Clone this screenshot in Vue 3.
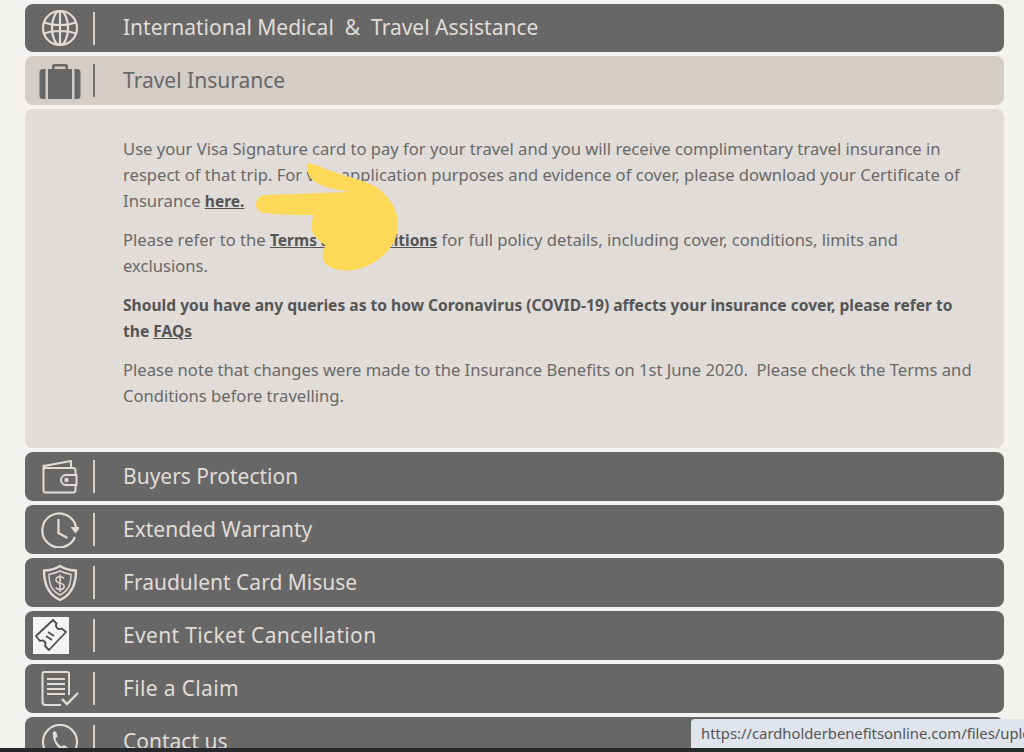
<template>
  <div class="page">
    <div class="list">
      <div class="row first">
        <div class="ico">
          <svg viewBox="0 0 38 38" width="38" height="38" fill="none" stroke="currentColor" stroke-width="2.2">
            <circle cx="19" cy="19" r="17"/>
            <ellipse cx="19" cy="19" rx="8" ry="17"/>
            <path d="M19 2v34M2.500 13c4 2 9 3 16.500 3s12.500-1 16.500-3M2.500 25c4-2 9-3 16.500-3s12.500 1 16.500 3"/>
          </svg>
        </div>
        <span class="sep"></span>
        <span class="title">International Medical&nbsp; &amp;&nbsp; Travel Assistance</span>
      </div>

      <div class="row open">
        <div class="ico">
          <svg viewBox="0 0 42 36" width="42" height="36" fill="currentColor">
            <path d="M13 6V3.500A2.500 2.500 0 0 1 15.500 1h11A2.500 2.500 0 0 1 29 3.500V6h-2.500V3.500h-11V6z"/>
            <path d="M9 6h24v30H9zM6.500 6v30H4a3.500 3.500 0 0 1-3.500-3.500v-23A3.500 3.500 0 0 1 4 6zM35.500 6H38a3.500 3.500 0 0 1 3.500 3.500v23A3.500 3.500 0 0 1 38 36h-2.500z"/>
          </svg>
        </div>
        <span class="sep"></span>
        <span class="title">Travel Insurance</span>
      </div>

      <div class="panel">
        <p>Use your Visa Signature card to pay for your travel and you will receive complimentary travel insurance in respect of that trip. For visa application purposes and evidence of cover, please download your Certificate of Insurance <a>here.</a></p>
        <p>Please refer to the <a>Terms and Conditions</a> for full policy details, including cover, conditions, limits and exclusions.</p>
        <p><strong>Should you have any queries as to how Coronavirus (COVID-19) affects your insurance cover, please refer to the <a>FAQs</a></strong></p>
        <p>Please note that changes were made to the Insurance Benefits on 1st June 2020.&nbsp; Please check the Terms and Conditions before travelling.</p>
      </div>

      <div class="row">
        <div class="ico">
          <svg viewBox="0 0 36 34" width="36" height="34" fill="none" stroke="currentColor" stroke-width="2" stroke-linejoin="round">
            <path d="M1.500 10.500V30a2.500 2.500 0 0 0 2.500 2.500h27a2.500 2.500 0 0 0 2.500-2.500V10.500a2.500 2.500 0 0 0-2.500-2.500H4a2.500 2.500 0 0 1-2.500-2.500z"/>
            <path d="M2 6 29 1v7"/>
            <path d="M34.500 15H24a5 5 0 0 0 0 10h10.500z" fill="#676767"/>
            <circle cx="24.500" cy="20" r="1.200"/>
          </svg>
        </div>
        <span class="sep"></span>
        <span class="title">Buyers Protection</span>
      </div>

      <div class="row">
        <div class="ico">
          <svg viewBox="0 0 38 36" width="38" height="36" fill="none" stroke="currentColor" stroke-width="2.200">
            <path d="M34 25A17 17 0 1 1 35 15"/>
            <path d="M17.500 7v14l9 5"/>
            <path d="M29.500 15h10l-5 6.500z" fill="currentColor" stroke="none"/>
          </svg>
        </div>
        <span class="sep"></span>
        <span class="title">Extended Warranty</span>
      </div>

      <div class="row">
        <div class="ico">
          <svg viewBox="0 0 36 38" width="36" height="38" fill="none" stroke="currentColor" stroke-width="2.400" stroke-linejoin="round">
            <path d="M18 2c5 3 10 4.500 16 4.500C34 22 29 31 18 36 7 31 2 22 2 6.500 8 6.500 13 5 18 2z"/>
            <path d="M18 7c4 2 7 3 11 3.200C29 21 26 27 18 31 10 27 7 21 7 10.200 11 10 14 9 18 7z" stroke-width="1.400"/>
            <path d="M22 14.500c-1-1.200-2.400-1.700-4-1.700-2.300 0-4 1.200-4 3.100 0 4.200 8.200 2.300 8.200 6.400 0 2-1.900 3.200-4.200 3.200-1.800 0-3.300-.7-4.300-2M18 10.500v17.500" stroke-width="1.500"/>
          </svg>
        </div>
        <span class="sep"></span>
        <span class="title">Fraudulent Card Misuse</span>
      </div>

      <div class="row">
        <div class="ico ticket">
          <svg viewBox="0 0 36 37" width="36" height="37" fill="none" stroke="#4d4d4d" stroke-width="1.800" stroke-linejoin="round">
            <rect width="36" height="37" fill="#f4f4f4" stroke="none"/>
            <path d="M3 19 20 3l3.500 3.500c-1 2-.5 3.500.5 4.500s2.500 1.500 4.500.5L33 15 16 33l-4-4c1-2 .5-3.500-.5-4.500S9 23 7 24z"/>
            <path d="m15 15 6 4M13 19l6 4"/>
          </svg>
        </div>
        <span class="sep"></span>
        <span class="title wide">Event Ticket Cancellation</span>
      </div>

      <div class="row">
        <div class="ico">
          <svg viewBox="0 0 38 36" width="38" height="36" fill="none" stroke="currentColor" stroke-width="2">
            <path d="M28 24V2.500a1.500 1.500 0 0 0-1.500-1.500H3a1.500 1.500 0 0 0-1.500 1.500V31A3 3 0 0 0 4.500 34H20"/>
            <path d="M6 8h18M6 13h18M6 18h18M6 23h18" stroke-width="2.200"/>
            <path d="m21 28 5 5 11-11" stroke-width="2.400"/>
          </svg>
        </div>
        <span class="sep"></span>
        <span class="title wide">File a Claim</span>
      </div>

      <div class="row">
        <div class="ico">
          <svg viewBox="0 0 36 36" width="36" height="36" fill="none" stroke="currentColor" stroke-width="2.200">
            <circle cx="18" cy="18" r="17"/>
            <path d="M11 8c2-1.500 3-.5 3.500 1l1 3.500-2 2c.5 3 3 6.500 6 8l2.500-1.500 3 2c1.500 1 1 2.500-.5 3.500-6 2-15-8-13.500-18.500z" fill="currentColor" stroke="none"/>
          </svg>
        </div>
        <span class="sep"></span>
        <span class="title">Contact us</span>
      </div>
    </div>

    <!-- scribble drawn over the screenshot -->
    <svg class="hand" viewBox="0 0 144 110" width="144" height="110">
      <path fill="#fed857" d="M52 1C62 3 74 9 84 12C100 17 114 20 124 28C136 38 142 50 142 62C142 78 134 90 120 99C108 107 94 110 84 108C74 106 68 102 67 96C66 90 67 86 70 84C62 78 55 72 56 65C56 60 56 56 58 53C40 53 24 53 8 51C3 50 0 47 0 43C0 37 4 33 9 33C36 32 66 31 94 30C84 28 76 27 70 25C62 22 54 18 52 11C51 7 50 3 52 1Z"/>
    </svg>

    <div class="status">https://cardholderbenefitsonline.com/files/uploads/</div>
    <div class="taskbar"></div>
  </div>
</template>

<script setup>
</script>

<style>
html, body { margin: 0; background: #f4f2ee; }
</style>

<style scoped>
.page {
  position: relative;
  height: 752px;
  overflow: hidden;
  background: #f4f2ee;
  font-family: "Noto Sans", "Open Sans", sans-serif;
}
.list {
  display: flex;
  flex-direction: column;
  gap: 4px;
  width: 979px;
  margin-left: 25px;
  padding-top: 4px;
}
.row {
  display: flex;
  flex: none;
  align-items: center;
  height: 49px;
  background: #676767;
  color: #e2dcd6;
  border-radius: 8px;
}
.row.first { height: 48px; }
.row.open {
  background: #d4ccc6;
  color: #676767;
}
.ico {
  display: flex;
  flex: none;
  justify-content: center;
  align-items: center;
  box-sizing: border-box;
  width: 68px;
  padding-left: 2px;
}
.ico.ticket {
  justify-content: flex-start;
  padding-left: 8px;
}
.sep {
  flex: none;
  width: 2px;
  height: 33px;
  background: currentColor;
  opacity: 0.9;
}
.title {
  margin-left: 28px;
  padding-bottom: 2px;
  font-size: 21px;
  white-space: nowrap;
}
.title.wide { letter-spacing: 0.35px; }
.panel {
  flex: none;
  box-sizing: border-box;
  height: 339px;
  padding: 27px 28px 0 98px;
  background: #e1dcd8;
  color: #696969;
  border-radius: 8px;
  font-size: 16.600px;
  line-height: 26px;
}
.panel p { margin: 0 0 13px; }
.panel a {
  color: #555;
  font-size: 15.500px;
  font-weight: 700;
  text-decoration: underline;
}
.panel strong {
  color: #555;
  font-size: 15.600px;
}
.hand {
  position: absolute;
  left: 256px;
  top: 162px;
}
.status {
  position: absolute;
  left: 691px;
  right: 0;
  top: 719px;
  height: 29px;
  padding-left: 10px;
  background: #e0e4ec;
  border-radius: 4px 0 0 0;
  color: #555;
  font-size: 14.800px;
  line-height: 28px;
  white-space: nowrap;
  overflow: hidden;
}
.taskbar {
  position: absolute;
  left: 0;
  right: 0;
  bottom: 0;
  height: 4px;
  background: #26282b;
}
</style>
